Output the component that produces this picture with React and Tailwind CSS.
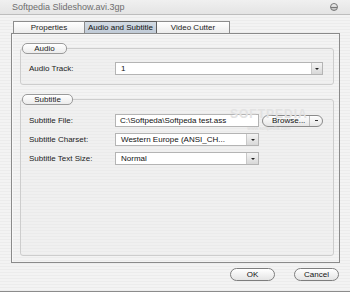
import React from "react";

const stripe =
  "bg-[repeating-linear-gradient(0deg,#ececec_0px,#ececec_1px,#f3f3f3_1px,#f3f3f3_3px)]";

function Pill({ children, w }) {
  return (
    <div
      className={`relative z-10 ml-[2px] h-[11px] ${w} rounded-[5px] border border-[#9a9a9a] bg-[linear-gradient(#ffffff,#ececec)] flex items-center justify-center text-[8px] leading-none text-[#222]`}
    >
      {children}
    </div>
  );
}

function Select({ value, w, arrowW = "w-[11px]" }) {
  return (
    <div className={`flex h-[13px] ${w} border border-[#b4b4b4] bg-white`}>
      <div className="flex-1 flex items-center pl-[5px] text-[8px] leading-none text-[#111] whitespace-nowrap overflow-hidden">
        {value}
      </div>
      <div
        className={`${arrowW} flex items-center justify-center border-l border-[#c8c8c8] bg-[linear-gradient(#f4f4f4,#d8d8d8)]`}
      >
        <div className="w-0 h-0 border-l-[2px] border-r-[2px] border-t-[2px] border-l-transparent border-r-transparent border-t-[#222]" />
      </div>
    </div>
  );
}

function Row({ label, children }) {
  return (
    <div className="flex items-center">
      <div className="w-[86px] text-[8px] leading-none text-[#222]">{label}</div>
      {children}
    </div>
  );
}

export default function App() {
  return (
    <div
      className={`w-[350px] h-[292px] ${stripe} flex flex-col border-b border-[#8c8c8c] overflow-hidden`}
      style={{ fontFamily: '"Liberation Sans", Arial, sans-serif' }}
    >
      {/* title bar */}
      <div className="h-[15px] flex items-center justify-between pl-[12px] pr-[12px] border-b border-[#bdbdbd] bg-[linear-gradient(#f0f0f0,#e4e4e4)]">
        <span className="text-[9px] leading-none text-[#6e6e6e]">
          Softpedia Slideshow.avi.3gp
        </span>
        <div className="w-[8px] h-[8px] rounded-full border border-[#777] bg-[linear-gradient(#f2f2f2,#bcbcbc)] flex items-center">
          <div className="w-full h-px bg-[#777]" />
        </div>
      </div>

      {/* tabs + panel */}
      <div className="mt-[6px] pl-[11px] pr-[10px] flex flex-col">
        <div className="flex pl-[2px] h-[12px]">
          <div className="w-[72px] border border-b-0 border-[#8c8c8c] bg-[linear-gradient(#ffffff,#ececec)] flex items-center justify-center text-[8px] leading-none text-[#222]">
            Properties
          </div>
          <div className="w-[72px] border border-b-0 border-l-0 border-[#5e5e5e] bg-[linear-gradient(#d3dbe4,#bfcad6)] flex items-center justify-center text-[8px] leading-none text-[#111]">
            Audio and Subtitle
          </div>
          <div className="w-[73px] border border-b-0 border-l-0 border-[#8c8c8c] bg-[linear-gradient(#ffffff,#ececec)] flex items-center justify-center text-[8px] leading-none text-[#222]">
            Video Cutter
          </div>
        </div>

        <div className="relative h-[230px] border border-[#8a8a8a] shadow-[inset_1px_1px_0_#f8f8f8] pt-[9px] pl-[8px] pr-[5px] flex flex-col">
          {/* Audio group */}
          <div className="flex flex-col">
            <Pill w="w-[45px]">Audio</Pill>
            <div className="-mt-[6px] h-[37px] rounded-[3px] border border-[#cdcdcd] bg-[#eaeaea]/40 pt-[13px] pl-[8px]">
              <Row label="Audio Track:">
                <Select value="1" w="w-[208px]" arrowW="w-[11px]" />
              </Row>
            </div>
          </div>

          {/* Subtitle group */}
          <div className="mt-[9px] flex flex-col">
            <Pill w="w-[51px]">Subtitle</Pill>
            <div className="-mt-[6px] h-[157px] rounded-[3px] border border-[#cdcdcd] bg-[#eaeaea]/40 pt-[14px] pl-[8px] flex flex-col gap-[6px]">
              <Row label="Subtitle File:">
                <div className="w-[144px] h-[13px] border border-[#b4b4b4] bg-white flex items-center pl-[4px] text-[8px] leading-none text-[#111] whitespace-nowrap overflow-hidden">
                  C:\Softpeda\Softpeda test.ass
                </div>
                <div className="ml-[3px] w-[61px] h-[12px] rounded-full border border-[#8a8a8a] bg-[linear-gradient(#ffffff,#e6e6e6)] flex items-center text-[8px] leading-none text-[#111]">
                  <span className="pl-[9px] w-[46px]">Browse...</span>
                  <span className="h-full border-l border-[#bdbdbd]" />
                  <span className="flex-1 flex justify-center">
                    <span className="w-[3px] h-px bg-[#333]" />
                  </span>
                </div>
              </Row>
              <Row label="Subtitle Charset:">
                <Select value="Western Europe (ANSI_CH..." w="w-[144px]" arrowW="w-[12px]" />
              </Row>
              <Row label="Subtitle Text Size:">
                <Select value="Normal" w="w-[144px]" arrowW="w-[12px]" />
              </Row>
            </div>
          </div>

          {/* watermark */}
          <div className="absolute left-[218px] top-[74px] flex flex-col items-center pointer-events-none">
            <span className="text-[12px] leading-none tracking-[1px] text-[#e2e2e2] font-bold">
              SOFTPEDIA
            </span>
            <span className="mt-[6px] text-[5px] leading-none text-[#dadada]">
              www.softpedia.com
            </span>
          </div>
        </div>
      </div>

      {/* buttons */}
      <div className="mt-[5px] pr-[11px] flex justify-end gap-[19px]">
        <div className="w-[45px] h-[13px] rounded-full border border-[#7e7e7e] bg-[linear-gradient(#ffffff,#e4e4e4)] flex items-center justify-center text-[8px] leading-none text-[#111]">
          OK
        </div>
        <div className="w-[45px] h-[13px] rounded-full border border-[#7e7e7e] bg-[linear-gradient(#ffffff,#e4e4e4)] flex items-center justify-center text-[8px] leading-none text-[#111]">
          Cancel
        </div>
      </div>
    </div>
  );
}
